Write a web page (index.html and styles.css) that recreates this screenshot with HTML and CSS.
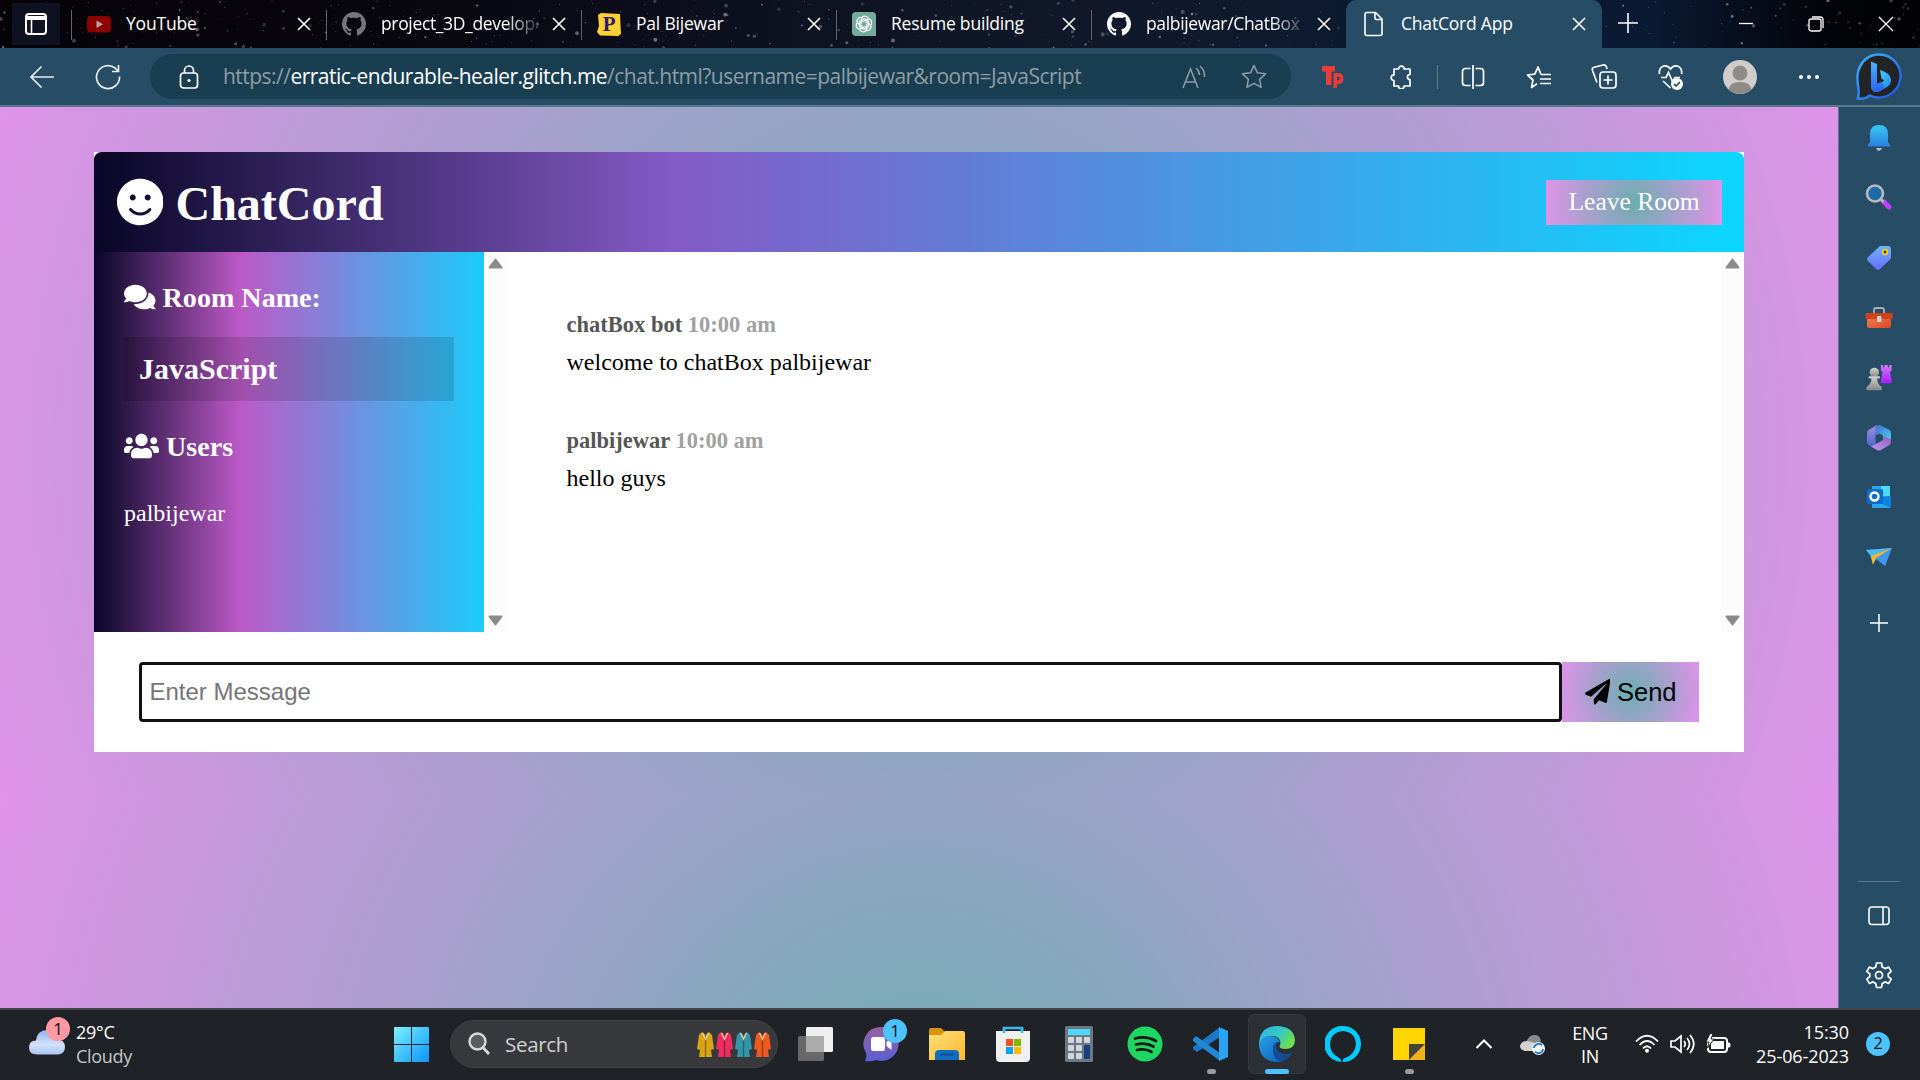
FILE: index.html
```html
<!DOCTYPE html>
<html lang="en">
<head>
<meta charset="utf-8">
<title>ChatCord App</title>
<link rel="stylesheet" href="styles.css">
</head>
<body>
<svg class="defs" width="0" height="0" aria-hidden="true">
  <defs>
    <linearGradient id="gBlue" x1="0" y1="0" x2="1" y2="1"><stop offset="0" stop-color="#5fd8ff"/><stop offset="1" stop-color="#1287e8"/></linearGradient>
    <linearGradient id="gWin" x1="0" y1="0" x2="1" y2="1"><stop offset="0" stop-color="#7cf3ff"/><stop offset="1" stop-color="#0a93ff"/></linearGradient>
    <linearGradient id="gBell" x1="0" y1="0" x2="0" y2="1"><stop offset="0" stop-color="#37c8f5"/><stop offset="1" stop-color="#2b7fe0"/></linearGradient>
    <linearGradient id="gTag" x1="0" y1="0" x2="0" y2="1"><stop offset="0" stop-color="#6db4ff"/><stop offset="1" stop-color="#6a6cf6"/></linearGradient>
    <linearGradient id="gPink" x1="0" y1="0" x2="0" y2="1"><stop offset="0" stop-color="#d17cf5"/><stop offset="1" stop-color="#a91cff"/></linearGradient>
    <linearGradient id="gGray" x1="0" y1="0" x2="0" y2="1"><stop offset="0" stop-color="#d2d2d2"/><stop offset="1" stop-color="#888"/></linearGradient>
    <linearGradient id="gRed" x1="0" y1="0" x2="1" y2="1"><stop offset="0" stop-color="#f4845c"/><stop offset="1" stop-color="#d8481f"/></linearGradient>
    <linearGradient id="gLoopA" x1="0" y1="0" x2="0" y2="1"><stop offset="0" stop-color="#a98be0"/><stop offset="1" stop-color="#4a68cf"/></linearGradient>
    <linearGradient id="gLoopB" x1="0" y1="0" x2="1" y2="1"><stop offset="0" stop-color="#3f6fd0"/><stop offset="1" stop-color="#4fd0f8"/></linearGradient>
    <linearGradient id="gLoopC" x1="0" y1="1" x2="1" y2="0"><stop offset="0" stop-color="#c896f0"/><stop offset="1" stop-color="#8a5fb8"/></linearGradient>
    <linearGradient id="gFolder" x1="0" y1="0" x2="1" y2="1"><stop offset="0" stop-color="#ffe07c"/><stop offset="1" stop-color="#fdb92b"/></linearGradient>
    <linearGradient id="gCloud" x1="0" y1="0" x2="0" y2="1"><stop offset="0" stop-color="#8fb2ee"/><stop offset=".6" stop-color="#d3e2fa"/><stop offset="1" stop-color="#a9c3f2"/></linearGradient>
    <linearGradient id="gChat" x1="0" y1="0" x2="0" y2="1"><stop offset="0" stop-color="#96619f"/><stop offset="1" stop-color="#5b5fd6"/></linearGradient>
    <linearGradient id="gEdge" x1="0" y1="0" x2="1" y2=".5"><stop offset="0" stop-color="#31b4f0"/><stop offset=".6" stop-color="#35c9c0"/><stop offset="1" stop-color="#6be04e"/></linearGradient>
    <linearGradient id="gEdge2" x1="0" y1="0" x2="1" y2="1"><stop offset="0" stop-color="#2aa2ea"/><stop offset="1" stop-color="#0a5fb8"/></linearGradient>
    <linearGradient id="gBing" x1="0" y1="0" x2="1" y2="1"><stop offset="0" stop-color="#3bb6ff"/><stop offset="1" stop-color="#2350e6"/></linearGradient>
    <linearGradient id="gBingB" x1="0" y1="0" x2="0" y2="1"><stop offset="0" stop-color="#4fb4ff"/><stop offset="1" stop-color="#2a62f0"/></linearGradient>
    <symbol id="github" viewBox="0 0 16 16"><path fill="currentColor" d="M8 0C3.58 0 0 3.58 0 8c0 3.54 2.29 6.53 5.47 7.59.4.07.55-.17.55-.38 0-.19-.01-.82-.01-1.49-2.01.37-2.53-.49-2.69-.94-.09-.23-.48-.94-.82-1.13-.28-.15-.68-.52-.01-.53.63-.01 1.08.58 1.23.82.72 1.21 1.87.87 2.33.66.07-.52.28-.87.51-1.07-1.78-.2-3.64-.89-3.64-3.95 0-.87.31-1.59.82-2.15-.08-.2-.36-1.02.08-2.12 0 0 .67-.21 2.2.82.64-.18 1.32-.27 2-.27s1.36.09 2 .27c1.53-1.04 2.2-.82 2.2-.82.44 1.1.16 1.92.08 2.12.51.56.82 1.27.82 2.15 0 3.07-1.87 3.75-3.65 3.95.29.25.54.73.54 1.48 0 1.07-.01 1.93-.01 2.2 0 .21.15.46.55.38A8.01 8.01 0 0 0 16 8c0-4.42-3.58-8-8-8z"/></symbol>
    <symbol id="cross" viewBox="0 0 14 14"><path d="M1 1l12 12M13 1L1 13" fill="none" stroke="#fff" stroke-width="1.6"/></symbol>
    <symbol id="dress" viewBox="0 0 19 27"><path fill="currentColor" d="M6 1l3.500 3L13 1l3 3 2 14-3 1-1-6 2 13H3l2-13-1 6-3-1L3 4z"/><path d="M9.500 4v22" stroke="#0005" stroke-width="1.500"/><path d="M6.500 2l3 6 3-6" fill="none" stroke="#e9c69a" stroke-width="1.500"/></symbol>
    <symbol id="up" viewBox="0 0 15 11"><path d="M7.500 1.500L13.500 9.500H1.500z" fill="#8b8b8b" stroke="#8b8b8b" stroke-width="2" stroke-linejoin="round"/></symbol>
  </defs>
</svg>

<header class="tabstrip">
  <svg class="stars" id="stars" width="1920" height="48"></svg>
  <div class="tabs">
    <button class="actions"><svg width="22" height="22" viewBox="0 0 22 22"><rect x="1" y="1" width="20" height="20" rx="3" fill="none" stroke="#fff" stroke-width="2"/><path d="M1 3h20v4H1z" fill="#fff"/><path d="M6.500 6v15" stroke="#fff" stroke-width="1.600"/></svg></button>
    <div class="tab"><svg class="fav" width="24" height="24" viewBox="0 0 24 24"><rect y="4" width="24" height="16.500" rx="4" fill="#8c0000"/><path d="M9.500 8.500v7.500l6.500-3.700z" fill="#b9a3a3"/></svg><span class="title">YouTube</span><svg class="x"><use href="#cross"/></svg></div>
    <div class="tab"><svg class="fav dim" width="24" height="24"><use href="#github"/></svg><span class="title fade">project_3D_develop</span><svg class="x"><use href="#cross"/></svg></div>
    <div class="tab"><svg class="fav" width="24" height="24" viewBox="0 0 24 24"><path d="M1 3l3-2 19 1 1 20-3 2-18-.500L0 20l2-6z" fill="#fdd033"/><text x="12" y="19" text-anchor="middle" font-family="Liberation Serif, serif" font-weight="700" font-size="21" fill="#2c1a6b">P</text></svg><span class="title">Pal Bijewar</span><svg class="x"><use href="#cross"/></svg></div>
    <div class="tab"><svg class="fav" width="24" height="24" viewBox="0 0 24 24"><path d="M4 0h16q4 0 4 4v20H4q-4 0-4-4V4q0-4 4-4z" fill="#74a99b"/><g fill="none" stroke="#fff" stroke-width="1.200" stroke-linejoin="round"><g id="petal"><path d="M9.300 12V7.500q0-3 3-3.500 2.500 0 4 2M9.300 8.500l3-1.700 4 2.300"/></g><use href="#petal" transform="rotate(60 12 12)"/><use href="#petal" transform="rotate(120 12 12)"/><use href="#petal" transform="rotate(180 12 12)"/><use href="#petal" transform="rotate(240 12 12)"/><use href="#petal" transform="rotate(300 12 12)"/></g></svg><span class="title">Resume building</span><svg class="x"><use href="#cross"/></svg></div>
    <div class="tab"><svg class="fav" width="24" height="24"><use href="#github"/></svg><span class="title fade">palbijewar/ChatBox</span><svg class="x"><use href="#cross"/></svg></div>
    <div class="tab active"><svg class="fav" width="24" height="26" viewBox="0 0 24 26"><path d="M5 1.500h8.500L20 8v14.500q0 2-2 2H5q-2 0-2-2v-19q0-2 2-2zM13 1.500V7q0 1.500 1.500 1.500H20" fill="none" stroke="#fff" stroke-width="1.600"/></svg><span class="title">ChatCord App</span><svg class="x"><use href="#cross"/></svg></div>
    <svg class="newtab" width="22" height="22" viewBox="0 0 22 22"><path d="M11 1v20M1 11h20" stroke="#fff" stroke-width="1.600"/></svg>
  </div>
  <div class="winctl">
    <svg width="16" height="16" viewBox="0 0 16 16"><path d="M1 7.500h14" stroke="#fff" stroke-width="1.300"/></svg>
    <svg width="16" height="16" viewBox="0 0 16 16" fill="none" stroke="#fff" stroke-width="1.300"><rect x="1" y="3" width="12" height="12" rx="2"/><path d="M4 1h8q3 0 3 3v8"/></svg>
    <svg width="16" height="16" viewBox="0 0 16 16"><path d="M1 1l14 14M15 1L1 15" stroke="#fff" stroke-width="1.300"/></svg>
  </div>
</header>

<nav class="toolbar">
  <svg class="back" width="26" height="24" viewBox="0 0 26 24"><path d="M25 12H2M12.500 1.500L2 12l10.500 10.500" fill="none" stroke="#e9eef1" stroke-width="1.700"/></svg>
  <svg class="reload" width="26" height="26" viewBox="0 0 26 26"><path d="M24.500 12.500A11.500 11.500 0 1 1 20 4l3 3M23.500 1v6.500H17" fill="none" stroke="#e9eef1" stroke-width="1.700"/></svg>
  <div class="address">
    <svg class="lock" width="20" height="24" viewBox="0 0 20 24"><rect x="1.500" y="8" width="17" height="15" rx="3" fill="none" stroke="#fff" stroke-width="1.700"/><path d="M5.500 8V5.500a4.500 4.500 0 0 1 9 0V8" fill="none" stroke="#fff" stroke-width="1.700"/><circle cx="10" cy="15.500" r="1.600" fill="#fff"/></svg>
    <span class="url">https://<b>erratic-endurable-healer.glitch.me</b>/chat.html?username=palbijewar&amp;room=JavaScript</span>
    <svg class="aloud" width="26" height="24" viewBox="0 0 26 24" fill="none" stroke="#8b9ba3" stroke-width="1.600"><path d="M2 23L9.500 4 17 23M4.500 17h10M15 3q3.500 3 3.500 7M19 1q5 4.500 4.500 11"/></svg>
    <svg class="star" width="26" height="25" viewBox="0 0 26 25"><path d="M13 1.500l3.500 7.300 8 1-5.900 5.500 1.500 8L13 19.400l-7.100 3.900 1.500-8L1.500 9.800l8-1z" fill="none" stroke="#8b9ba3" stroke-width="1.600" stroke-linejoin="round"/></svg>
  </div>
  <div class="tools">
    <svg width="24" height="24" viewBox="0 0 24 24"><path d="M1 1h13v5.500h-3.500V20H5V6.500H1zM12.500 8h4q6 0 6 5.500t-6 5.500h-.500v4h-3.500zm3.500 3.500v4q3 .500 3-2t-3-2z" fill="#ee3a38"/></svg>
    <svg width="24" height="24" viewBox="0 0 24 24"><path d="M5 4h4.500a2.800 2.800 0 1 1 5.600 0H21v5.500a2.600 2.600 0 1 0 0 5.200V21h-5.900a2.800 2.800 0 1 1-5.600 0H5v-5.500a2.800 2.800 0 1 1 0-5.600z" fill="none" stroke="#fff" stroke-width="1.700" stroke-linejoin="round"/></svg>
    <i class="vline"></i>
    <svg width="24" height="24" viewBox="0 0 24 24"><path d="M12 0v24M9.500 3.500h-5q-3 0-3 3v11q0 3 3 3h5M14.500 3.500h5q3 0 3 3v11q0 3-3 3h-5" fill="none" stroke="#fff" stroke-width="1.700"/></svg>
    <svg width="26" height="24" viewBox="0 0 26 24"><path d="M15 9.500L12 2 8.800 9.200l-7.300.8 5.500 5L5.500 22.500l5.500-3.700M15 9.500h10M14 14h11M14 18.500h11" fill="none" stroke="#fff" stroke-width="1.700" stroke-linejoin="round"/></svg>
    <svg width="26" height="26" viewBox="0 0 26 26" fill="none" stroke="#fff" stroke-width="1.700"><rect x="9" y="8" width="16" height="16" rx="3"/><path d="M17 11.500v9M12.500 16h9M6 18.500L1.500 6.500q-.800-2.500 1.700-3.200l9-2.300q2-.500 3 1.500l1 2.500"/></svg>
    <svg width="26" height="26" viewBox="0 0 26 26" fill="none" stroke="#fff" stroke-width="1.700"><path d="M1.500 10q-1-6 4-8 4.500-1 7 3 2.500-4 7-3 5 2 4 8M3 13.500h5l2.500-5 4 9 2.500-4h5M5 17l7.500 7"/><circle cx="19" cy="20" r="6" fill="#fff" stroke="none"/><path d="M16 20l2 2 4-4" stroke="#264d65"/></svg>
    <svg width="34" height="34" viewBox="0 0 34 34"><circle cx="17" cy="17" r="17" fill="#d0cecb"/><circle cx="17" cy="13" r="7.500" fill="#8e8a87"/><path d="M6 30q0-8 11-8t11 8q-5 4-11 4T6 30z" fill="#8e8a87"/></svg>
    <svg width="22" height="6" viewBox="0 0 22 6" fill="#fff"><circle cx="3" cy="3" r="2"/><circle cx="11" cy="3" r="2"/><circle cx="19" cy="3" r="2"/></svg>
    <svg width="46" height="48" viewBox="0 0 46 48"><path d="M23 1.500A21.500 21.500 0 1 1 14 42.500Q9 46.500 1.800 45.500 3.500 42 2 32 .500 24 2.500 17 8 2 23 1.500z" fill="#222426" stroke="url(#gBing)" stroke-width="2.400"/><path d="M24 17q10 3 11 9 .500 5-4 8l-8 4.500q-6 2-8-4l11-5 2-2-2.500-2z" fill="url(#gBlue)"/><path d="M15 8.500l6 2.500v19.500l5-1.500 3 6-6 3.500q-7 2-8-5z" fill="url(#gBingB)"/></svg>
  </div>
</nav>

<div class="middle">
  <main class="page">
    <div class="chat">
      <header class="chat-head">
        <h1><svg width="46.500" height="48" viewBox="0 0 496 512"><path fill="#fff" d="M248 8C111 8 0 119 0 256s111 248 248 248 248-111 248-248S385 8 248 8zm80 168c17.700 0 32 14.300 32 32s-14.300 32-32 32-32-14.300-32-32 14.300-32 32-32zm-160 0c17.700 0 32 14.300 32 32s-14.300 32-32 32-32-14.300-32-32 14.300-32 32-32zm194.800 170.200C334.300 380.400 292.500 400 248 400s-86.300-19.600-114.800-53.800c-13.600-16.300 11-36.700 24.600-20.500 22.400 26.900 55.200 42.200 90.200 42.200s67.800-15.400 90.200-42.200c13.400-16.200 38.100 4.200 24.600 20.500z"/></svg><span>ChatCord</span></h1>
        <a class="leave">Leave Room</a>
      </header>
      <div class="chat-main">
        <aside class="rooms">
          <div class="rooms-in">
            <h3><svg width="31.600" height="28" viewBox="0 0 576 512"><path fill="#fff" d="M416 192c0-88.400-93.100-160-208-160S0 103.600 0 192c0 34.300 14.100 65.900 38 92-13.400 30.200-35.500 54.200-35.800 54.500-2.200 2.300-2.800 5.700-1.500 8.700S4.800 352 8 352c36.600 0 66.900-12.300 88.700-25 32.200 15.700 70.300 25 111.300 25 114.900 0 208-71.600 208-160zm122 220c23.900-26 38-57.700 38-92 0-66.900-53.500-124.200-129.300-148.100.9 6.600 1.300 13.300 1.300 20.100 0 105.900-107.700 192-240 192-10.800 0-21.300-.8-31.700-1.900C207.800 439.600 281.800 480 368 480c41 0 79.100-9.200 111.300-25 21.800 12.700 52.100 25 88.700 25 3.200 0 6.100-1.900 7.300-4.800 1.300-2.900.7-6.300-1.500-8.700-.3-.3-22.400-24.200-35.800-54.500z"/></svg>Room Name:</h3>
            <h2>JavaScript</h2>
            <h3><svg width="35" height="28" viewBox="0 0 640 512"><path fill="#fff" d="M96 224c35.300 0 64-28.700 64-64s-28.700-64-64-64-64 28.700-64 64 28.700 64 64 64zm448 0c35.300 0 64-28.700 64-64s-28.700-64-64-64-64 28.700-64 64 28.700 64 64 64zm32 32h-64c-17.600 0-33.500 7.100-45.100 18.600 40.300 22.100 68.900 62 75.100 109.400h66c17.700 0 32-14.300 32-32v-32c0-35.300-28.700-64-64-64zm-256 0c61.900 0 112-50.100 112-112S381.900 32 320 32 208 82.100 208 144s50.100 112 112 112zm76.800 32h-8.300c-20.800 10-43.900 16-68.500 16s-47.600-6-68.500-16h-8.300C179.600 288 128 339.600 128 403.200V432c0 26.500 21.500 48 48 48h288c26.500 0 48-21.500 48-48v-28.800c0-63.600-51.600-115.200-115.200-115.200zm-223.700-13.400C161.500 263.100 145.600 256 128 256H64c-35.300 0-64 28.700-64 64v32c0 17.700 14.300 32 32 32h65.900c6.300-47.400 34.900-87.300 75.200-109.400z"/></svg>Users</h3>
            <ul><li>palbijewar</li></ul>
          </div>
          <div class="scroll"><svg><use href="#up"/></svg><svg class="down"><use href="#up"/></svg></div>
        </aside>
        <section class="messages">
          <div class="list">
            <div class="msg"><p class="meta">chatBox bot <span>10:00 am</span></p><p class="text">welcome to chatBox palbijewar</p></div>
            <div class="msg"><p class="meta">palbijewar <span>10:00 am</span></p><p class="text">hello guys</p></div>
          </div>
          <div class="scroll"><svg><use href="#up"/></svg><svg class="down"><use href="#up"/></svg></div>
        </section>
      </div>
      <form class="compose">
        <input type="text" placeholder="Enter Message">
        <button type="button" class="send"><svg width="25.500" height="25.500" viewBox="0 0 512 512"><path d="M476 3.200L12.500 270.600c-18.100 10.400-15.800 35.600 2.200 43.200L121 358.400l287.300-253.200c5.500-4.900 13.300 2.600 8.600 8.300L176 407v80.500c0 23.600 28.500 32.900 42.500 15.800L282 426l124.600 52.200c14.200 6 30.400-2.900 33-18.200l72-432C515 7.800 493.300-6.800 476 3.200z"/></svg>Send</button>
      </form>
    </div>
  </main>
  <aside class="edgebar">
    <div class="apps">
      <svg viewBox="0 0 28 28"><path d="M11 24h6q-1 3-3 3t-3-3z" fill="#b9bcc2"/><path d="M14 1q9 0 9 9v8l2 3v1.500H3V21l2-3v-8q0-9 9-9z" fill="url(#gBell)"/></svg>
      <svg viewBox="0 0 28 28"><path d="M19 18l5 5" stroke="#c040ff" stroke-width="5" stroke-linecap="round"/><path d="M15.500 15l3 3" stroke="#b9b9b9" stroke-width="3"/><circle cx="10" cy="9.500" r="8" fill="#1b6da8" stroke="#b9b9b9" stroke-width="2.600"/></svg>
      <svg viewBox="0 0 28 28"><path d="M15 2h8q3 0 3 3v8q0 1.500-1 2.500L15 25q-2 2-4 0l-8-8q-2-2 0-4z" fill="url(#gTag)"/><circle cx="20" cy="8" r="2.300" fill="#345" stroke="#f5cf12" stroke-width="1.800"/></svg>
      <svg viewBox="0 0 28 28"><path d="M9 9V6q0-2 2-2h6q2 0 2 2v3" fill="none" stroke="#a7afb4" stroke-width="1.800"/><rect x="2" y="9" width="24" height="15" rx="2" fill="url(#gRed)"/><path d="M.500 9h27v6h-27z" fill="#d0421b"/><rect x="12" y="12" width="4.500" height="6" rx="1" fill="#cfd2d4"/></svg>
      <svg viewBox="0 0 28 30"><path d="M16 1h2.500v2.500H20V1h3.500v2.500H25V1h2.500v6l-1.700 1.500L27.500 18v2.500H16V18l1.700-9.500L16 7z" fill="url(#gPink)"/><circle cx="9" cy="9" r="5" fill="url(#gGray)"/><path d="M3 13h12v2.500h-3Q12 21 17 25v3H.500v-3Q6 21 6 15.500H3z" fill="url(#gGray)"/></svg>
      <svg viewBox="0 0 28 28"><path d="M12 1L3.500 6Q2 7 2 9v9q0 2 1.500 3l3.500 2 3.500-3V10q0-1 1-1.500z" fill="url(#gLoopA)"/><path d="M10.500 3.500v13L14 14V9.500l4 2.300V15l8 3V9q0-2-1.500-3L16 1.500q-3-1.500-5.500 2z" fill="url(#gLoopB)"/><path d="M26 15v3q0 2-1.500 3L16 26q-2 1-4 0l-6-3.500 12-6.500q1-1 0-4z" fill="url(#gLoopC)"/><path d="M14 9.500l4 2.300v4L14 18l-3.500-2v-4.500z" fill="#264d65"/></svg>
      <svg viewBox="0 0 28 28"><path d="M7 2h18v22H7z" fill="#2aa6ea"/><path d="M16 2h9v10h-9z" fill="#50d9ff"/><path d="M5 14l21 10V12z" fill="#1283dc"/><rect x="2" y="5" width="16" height="15" rx="2" fill="#0f6cc8"/><circle cx="9.500" cy="12.500" r="4" fill="none" stroke="#fff" stroke-width="2.400"/></svg>
      <svg viewBox="0 0 28 28"><path d="M1 6l26-2-7 18-9-7-3 5-3-9z" fill="#3f97ee"/><path d="M1 6l26-2L6 12z" fill="#4db9f5"/><path d="M6 12l21-8-16 10-3 7z" fill="#f6b91c"/></svg>
      <svg viewBox="0 0 28 28"><path d="M14 5v18M5 14h18" stroke="#fff" stroke-width="1.500"/></svg>
    </div>
    <div class="foot">
      <svg width="22" height="20" viewBox="0 0 22 20" fill="none" stroke="#fff" stroke-width="1.600"><rect x="1" y="1" width="20" height="17.500" rx="3"/><path d="M15 1v17.500"/></svg>
      <svg width="28" height="28" viewBox="0 0 28 28" fill="none" stroke="#fff" stroke-width="1.700" stroke-linejoin="round"><path d="M11.500 2h5l.700 4 2.800 1.600 3.700-1.500 2.500 4.300-3 2.600v2.500l3 2.600-2.500 4.300-3.700-1.500-2.800 1.600-.700 4h-5l-.700-4L8 20.900l-3.700 1.500-2.500-4.300 3-2.600V13l-3-2.600 2.500-4.300L8 7.600 10.800 6z"/><circle cx="14" cy="14.200" r="3.500"/></svg>
    </div>
  </aside>
</div>

<footer class="taskbar">
  <div class="weather">
    <div class="wicon"><svg width="36" height="26" viewBox="0 0 36 26"><path d="M8 25.500q-8 0-8-7t7-7Q8 1 18 1q9 0 10 9 8 1 8 8t-7 7.500z" fill="url(#gCloud)"/></svg><span class="badge pink">1</span></div>
    <div class="wtext"><span>29°C</span><span class="sub">Cloudy</span></div>
  </div>
  <div class="dock">
    <svg class="win" width="35" height="35" viewBox="0 0 35 35"><path d="M0 1q0-1 1-1h16v17H0zM18 0h16q1 0 1 1v16H18zM0 18h17v17H1q-1 0-1-1zM18 18h17v16q0 1-1 1H18z" fill="url(#gWin)"/></svg>
    <div class="search"><svg width="24" height="24" viewBox="0 0 24 24"><circle cx="9.500" cy="9.500" r="8" fill="#5a5c60" stroke="#d9dadb" stroke-width="2.400"/><path d="M15 15.500l6 6.500" stroke="#d9dadb" stroke-width="2.800"/></svg><span>Search</span>
      <div class="dresses"><svg class="d1"><use href="#dress"/></svg><svg class="d2"><use href="#dress"/></svg><svg class="d3"><use href="#dress"/></svg><svg class="d4"><use href="#dress"/></svg></div></div>
    <div class="icons">
      <div class="app"><svg viewBox="0 0 36 36"><rect x="1" y="10" width="26" height="25" rx="1.500" fill="#686869"/><rect x="9" y="1" width="27" height="25" rx="1.500" fill="#efefef"/><path d="M9 10h18v16H9z" fill="#acacac"/></svg></div>
      <div class="app"><svg viewBox="0 0 36 36"><path d="M17 1a17 17 0 1 1-4 33q-5 2-11 1 2-4 1-8A17 17 0 0 1 17 1z" fill="url(#gChat)"/><rect x="8" y="11" width="14" height="14" rx="2.500" fill="#fff"/><path d="M23.500 16l5-4v12l-5-4z" fill="#fff"/></svg><span class="badge blue">1</span></div>
      <div class="app"><svg viewBox="0 0 36 36"><path d="M0 4q0-2 2-2h10l4 4v6H0z" fill="#d9930d"/><path d="M0 9h12l4-4h18q2 0 2 2v27H0z" fill="url(#gFolder)"/><path d="M6 34v-6q0-4 4-4h16q4 0 4 4v6z" fill="#0f6cc0"/><path d="M11 28.500h14" stroke="#0c4f92" stroke-width="2"/></svg></div>
      <div class="app"><svg viewBox="0 0 36 36"><path d="M9 8V2h18v6" fill="none" stroke="#3db8ee" stroke-width="2.600"/><path d="M1 5h34v27q0 4-4 4H5q-4 0-4-4z" fill="#efefef"/><path d="M9 7V2M27 7V2" stroke="#3db8ee" stroke-width="2.600"/><path d="M11 13h7v7h-7z" fill="#f25022"/><path d="M19 13h7v7h-7z" fill="#7fba00"/><path d="M11 21h7v7h-7z" fill="#00a4ef"/><path d="M19 21h7v7h-7z" fill="#ffb900"/></svg></div>
      <div class="app"><svg viewBox="0 0 36 36"><rect x="4" width="28" height="36" rx="1.500" fill="#6d7883"/><rect x="7" y="3" width="22" height="6" fill="#4fd8fb"/><g fill="#cfd6dc"><rect x="7" y="11" width="6" height="6" rx="1"/><rect x="15" y="11" width="6" height="6" rx="1"/><rect x="23" y="11" width="6" height="6" rx="1"/><rect x="7" y="19" width="6" height="6" rx="1"/><rect x="15" y="19" width="6" height="6" rx="1"/><rect x="7" y="27" width="6" height="6" rx="1"/><rect x="15" y="27" width="6" height="6" rx="1"/></g><rect x="23" y="19" width="6" height="14" rx="1" fill="#17427e"/></svg></div>
      <div class="app"><svg viewBox="0 0 36 36"><circle cx="18" cy="18" r="17.500" fill="#1ed760"/><path d="M8 12.500q11-3 21 2.500M9 18.500q9.500-2.500 17.500 2M10 24q8-2 14.500 1.800" fill="none" stroke="#10181a" stroke-width="2.800" stroke-linecap="round"/></svg></div>
      <div class="app"><svg viewBox="0 0 36 36"><path d="M27 1v10L4 26l-4-3v-2z" fill="#1a79c4"/><path d="M0 13l3-3 24 17v8L0 15z" fill="#2287d3"/><path d="M26 1v34l9-4V5z" fill="#2ba4f4"/></svg><i class="run"></i></div>
      <div class="app on"><svg viewBox="0 0 36 36"><path d="M0 19Q0 0 19 0q16 1 17 14 0 9-10 9-7 0-5-4 2-7-6-9Q4 10 0 19z" fill="url(#gEdge)"/><path d="M0 19q2-9 11-9 8 0 10 6-7 0-7 8 1 9 10 11-4 1.500-8 1Q1 34 0 19z" fill="url(#gEdge2)"/><path d="M14 22q0-4 4-6-3 11 9 12 4 0 7-2-5 9-13 9-8-3-7-13z" fill="#134c92"/></svg><i class="run wide"></i></div>
      <div class="app"><svg viewBox="0 0 36 36"><path d="M16.500 36A18 18 0 0 1 18 0a18 18 0 0 1 0 36q-1-2 1-3.500Q30 29 31 18 30 6 18 5 6 6 5 18q0 9 8 13 3 1.500 3.500 5z" fill="#00caff"/></svg></div>
      <div class="app"><svg viewBox="0 0 36 36"><path d="M2 2h32v16L18 34H2z" fill="#ffd500"/><path d="M18 18h16L18 34z" fill="#46433a"/><path d="M34 18v16H18z" fill="#f0b21b"/></svg><i class="run"></i></div>
    </div>
  </div>
  <div class="tray">
    <svg width="18" height="12" viewBox="0 0 18 12"><path d="M1.500 10L9 2.500l7.500 7.500" fill="none" stroke="#fff" stroke-width="2"/></svg>
    <svg class="od" width="26" height="22" viewBox="0 0 26 22"><path d="M6 10Q9 1 15 2q5 0 6 6-9 3-8 9z" fill="#8b8b8b"/><path d="M5 18q-5-1-5-5 1-5 7-5 8 1 10 4l-4 6z" fill="#d2d2d2"/><circle cx="18.500" cy="15.500" r="6.500" fill="#fff"/><path d="M14 15a4.500 4.500 0 0 1 8-2.500M23 16a4.500 4.500 0 0 1-8 2.500" fill="none" stroke="#1878d4" stroke-width="1.800"/></svg>
    <div class="lang"><span>ENG</span><span>IN</span></div>
    <div class="status">
      <svg width="24" height="20" viewBox="0 0 24 20" fill="none" stroke="#fff" stroke-width="1.800"><path d="M1 7.500Q12-4 23 7.500M4.500 11Q12 3 19.500 11M8 14.500Q12 10 16 14.500"/><circle cx="12" cy="16.800" r="2" fill="#fff" stroke="none"/></svg>
      <svg width="25" height="20" viewBox="0 0 25 20" fill="none" stroke="#fff" stroke-width="1.700"><path d="M1 7h4l6-5v16l-6-5H1zM14 7q2.500 3 0 6M17 4q5 6 0 12M20 1q7.500 9 0 18"/></svg>
      <svg width="25" height="20" viewBox="0 0 25 20"><rect x="2" y="4" width="19" height="14" rx="3" fill="none" stroke="#fff" stroke-width="2"/><rect x="5" y="7" width="13" height="8" fill="#fff"/><path d="M22 8.500h1q1.500 0 1.500 2.500t-1.500 2.500h-1z" fill="#fff"/><path d="M4-.500L0 8h3l-1.500 6L8 5H5l2-5.500z" fill="#fff" stroke="#1f2226" stroke-width="1"/></svg>
    </div>
    <div class="clock"><span>15:30</span><span>25-06-2023</span></div>
    <span class="count">2</span>
  </div>
</footer>
<script src="stars.js"></script>
</body>
</html>
```
FILE: styles.css
```css
* { box-sizing: border-box; margin: 0; padding: 0; }
body { width: 1920px; height: 1080px; overflow: hidden; display: flex; flex-direction: column; background: #264d65; color: #fff; font-family: "Open Sans", "Noto Sans", sans-serif; }
svg { display: block; flex: none; }
button { border: 0; background: none; }
.defs { position: absolute; }

/* tab strip */
.tabstrip { position: relative; height: 48px; flex: none; display: flex; justify-content: space-between; background: linear-gradient(90deg, #050308 0, #08060d 20%, #0c0e1c 35%, #0f1626 50%, #10192c 62%, #0b1a30 72%, #0a1a33 86%, #030409 95%, #020203 100%); }
.stars { position: absolute; inset: 0; }
.tabs { position: relative; display: flex; align-items: center; }
.actions { width: 48px; height: 42px; margin: 0 11px 0 12px; background: #0e1120; display: grid; place-items: center; }
.tab { position: relative; width: 255px; height: 48px; display: flex; align-items: center; padding: 0 15px 0 16px; font-size: 17.500px; letter-spacing: -.2px; }
.tab::before { content: ""; position: absolute; left: 0; top: 10px; width: 1px; height: 30px; background: #62636b; }
.tab .title { width: 158px; margin: 0 0 2px 15px; white-space: nowrap; }
.tab .fade { letter-spacing: -.35px; -webkit-mask-image: linear-gradient(90deg, #000 125px, transparent 162px); mask-image: linear-gradient(90deg, #000 125px, transparent 162px); }
.tab .x { width: 14px; height: 14px; margin-left: 13px; }
.dim { color: #76777c; }
.tab.active { width: 256px; background: #264d65; border-radius: 10px 10px 0 0; }
.tab.active::before { display: none; }
.newtab { margin: 0 0 2px 15px; }
.winctl { position: relative; display: flex; align-items: center; gap: 54px; padding-right: 26px; }

/* toolbar */
.toolbar { height: 59px; flex: none; display: flex; align-items: center; background: #264d65; border-bottom: 2px solid #587889; }
.back { margin-left: 29px; }
.reload { margin-left: 40px; }
.address { width: 1141px; height: 45px; margin-left: 29px; padding: 0 24px 0 29px; background: #193d51; border-radius: 23px; display: flex; align-items: center; }
.url { margin: 0 auto 2px 24px; font-size: 21px; letter-spacing: -.52px; color: #8f9da4; white-space: nowrap; }
.url b { font-weight: 400; color: #fff; }
.aloud { margin-right: 34px; }
.tools { flex: 1; display: grid; grid-template-columns: 68px 68px 4px 68px 64px 66px 68px 70px 68px 72px; align-items: center; justify-items: center; padding-left: 8px; }
.vline { width: 1px; height: 24px; background: #5d7c8c; }

.middle { flex: 1; display: flex; min-height: 0; }
.page { width: 1838px; padding-top: 45px; background: radial-gradient(circle, #6caeb0, #df93e9) 0 0 / 100% 690px; font-family: "Liberation Serif", serif; }
.chat { width: 1650px; height: 600px; margin: 0 auto; background: #fff; display: flex; flex-direction: column; }
.chat-head { height: 100px; padding: 0 22px 0 22px; border-radius: 7.500px 7.500px 0 0; display: flex; align-items: center; justify-content: space-between; background: linear-gradient(90deg, #080626, #845ac6 35%, #0bd7ff); }
h1 { display: flex; align-items: center; gap: 12.500px; font-size: 48px; line-height: 55px; }
h1 svg { margin: 0 0 1px .500px; }
h1 span { margin-top: 2px; }
.leave { padding: 7px 22.500px 8px; font-size: 25.500px; line-height: 30px; background: radial-gradient(circle, #6caeb0, #df93e9); }
.chat-main { height: 380px; display: grid; grid-template-columns: 413px 1fr; }
.rooms { display: flex; background: linear-gradient(90deg, #080626, #bc5ac7 35.500%, #0bd7ff); }
.rooms-in { flex: 1; padding: 30px; }
.scroll { width: 23px; background: #fcfcfc; display: flex; flex-direction: column; justify-content: space-between; align-items: center; padding: 6px 0; }
.scroll svg { width: 15px; height: 11px; }
.scroll .down { transform: scaleY(-1); }
h3 { display: flex; gap: 7px; align-items: center; font-size: 28.080px; line-height: 32px; margin-bottom: 22.500px; }
h3 svg { margin-bottom: 2px; }
h2 { font-size: 30px; line-height: 34px; padding: 15px; margin-bottom: 30px; background: rgba(0, 0, 0, .13); }
ul { list-style: none; }
li { font-size: 24px; line-height: 28px; padding-top: 14px; }
.messages { display: flex; color: #000; }
.list { flex: 1; padding: 54px 59.500px 0; }
.msg { margin-bottom: 41px; }
.meta { font-size: 22.500px; line-height: 38px; font-weight: 700; color: #565656; }
.meta span { color: #a1a1a1; }
.text { font-size: 24px; line-height: 37px; }
.compose { height: 120px; padding: 30px 45px; display: flex; }
input { flex: 1; padding: 0 7.500px; border: 3px solid #111; border-radius: 4px; outline: 0; font: 24px "Liberation Sans", sans-serif; }
input::placeholder { color: #757575; }
.send { width: 137px; padding-left: 22.500px; display: flex; align-items: center; gap: 7px; font: 25.500px "Liberation Sans", sans-serif; color: #000; background: radial-gradient(circle, #6caeb0, #df93e9); }

.edgebar { flex: 1; border-left: 1px solid #587889; display: flex; flex-direction: column; justify-content: space-between; align-items: center; background: #264d65; padding: 17px 1px 16px 0; }
.apps { display: flex; flex-direction: column; gap: 32px; }
.apps svg { width: 28px; height: 28px; }
.apps svg:last-child { margin-top: 5px; }
.foot { width: 42px; height: 111px; border-top: 1px solid #587889; padding: 24px 0 3px; display: flex; flex-direction: column; justify-content: space-between; align-items: center; }

/* taskbar */
.taskbar { height: 72px; flex: none; border-top: 2px solid #434548; padding-bottom: 2px; background: #1f2226; display: flex; align-items: center; font-size: 18px; line-height: 24px; letter-spacing: -.3px; }
.weather { width: 394px; padding-left: 29px; display: flex; align-items: center; gap: 11px; }
.wicon { position: relative; }
.wicon svg { margin-top: -5px; }
.badge { position: absolute; width: 24px; height: 24px; border-radius: 50%; color: #111; font-size: 17px; text-align: center; line-height: 23px; }
.pink { background: #ff99a4; left: 17px; top: -17px; }
.blue { background: #4cc2ff; left: 31px; top: 5px; }
.wtext, .clock, .lang { display: flex; flex-direction: column; }
.sub { color: #c6c7c9; }
.dock { display: flex; align-items: center; }
.search { width: 328px; height: 48px; margin-left: 21px; padding: 0 5px 0 17px; border-radius: 24px; background: #37393c; border: 1px solid #3f4144; display: flex; align-items: center; font-size: 20.500px; color: #d0d1d2; }
.search span { margin-left: 13px; }
.dresses { display: flex; margin-left: auto; }
.dresses svg { width: 19px; height: 27px; }
.d1 { color: #d9a514; }
.d2 { color: #ee2c60; }
.d3 { color: #3397a9; }
.d4 { color: #ee5a1f; }
.icons { display: flex; gap: 8px; margin-left: 8px; }
.app { position: relative; width: 58px; height: 60px; display: grid; place-items: center; border-radius: 6px; }
.app > svg { width: 36px; height: 36px; }
.on { background: #2c3034; border: 1px solid #37393d; }
.run { position: absolute; left: 25px; bottom: 0; width: 9px; height: 5px; border-radius: 3px; background: #9a9b9d; }
.wide { left: 16px; width: 24px; bottom: -1px; background: #4cc2ff; }
.tray { margin-left: auto; padding-right: 30px; display: flex; align-items: center; }
.od { margin-left: 27px; }
.lang { width: 44px; margin-left: 22px; padding-top: 1px; text-align: center; line-height: 23px; }
.status { display: flex; gap: 11px; margin-left: 23px; }
.clock { width: 118px; text-align: right; letter-spacing: -.1px; }
.count { width: 24px; height: 24px; margin-left: 17px; border-radius: 50%; background: #4cc2ff; color: #111; font-size: 16px; line-height: 23px; text-align: center; }
```
FILE: stars.js
```js
// Scatter a repeatable star field over the tab strip theme background.
const field = document.getElementById('stars');
const tints = ['#9fb4c8', '#b79aa8', '#c9c4cf', '#6d88a8', '#7a6a80'];
let seed = 41;
const next = () => (seed = (seed * 16807) % 2147483647) / 2147483647;
for (let i = 0; i < 420; i++) {
  const dot = document.createElementNS('http://www.w3.org/2000/svg', 'circle');
  dot.setAttribute('cx', (next() * 1920).toFixed(1));
  dot.setAttribute('cy', (next() * 48).toFixed(1));
  const size = next();
  dot.setAttribute('r', (0.5 + size * size * size * 1.6).toFixed(2));
  dot.setAttribute('fill', tints[Math.floor(next() * tints.length)]);
  dot.setAttribute('opacity', (0.15 + next() * 0.5).toFixed(2));
  field.appendChild(dot);
}
```
